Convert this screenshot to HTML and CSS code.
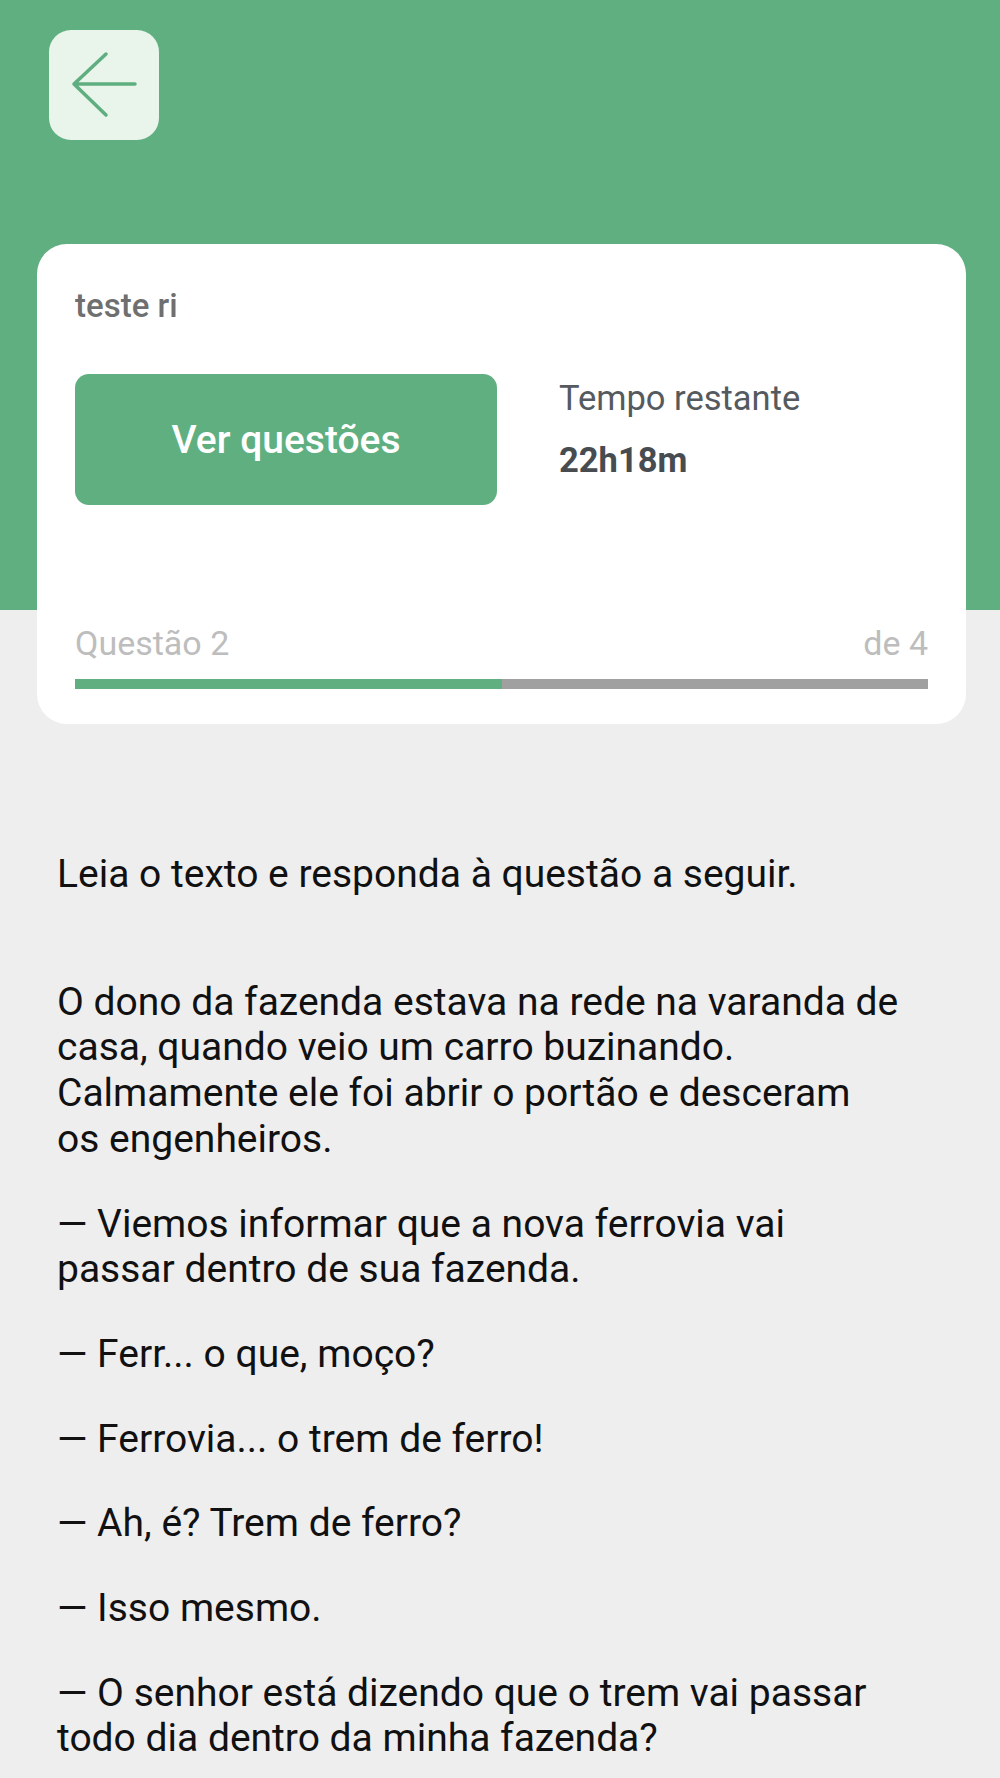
FILE: index.html
```html
<!DOCTYPE html>
<html lang="pt-BR">
<head>
    <meta charset="UTF-8">
    <meta name="viewport" content="width=device-width, initial-scale=1.0">
    <title>Questão 2 de 4</title>
    <link rel="stylesheet" href="styles.css">
</head>
<body>
    <div class="top">
        <button class="back" aria-label="Voltar">
            <svg width="110" height="110" viewBox="0 0 110 110">
                <path d="M86 54 H25 M57 24 L25 54 L57 85" fill="none" stroke="#5fae7f" stroke-width="3.5" stroke-linecap="round" stroke-linejoin="round"/>
            </svg>
        </button>

        <div class="card">
            <div class="card-title">teste ri</div>
            <div class="card-row">
                <button class="see-btn">Ver questões</button>
                <div class="timer">
                    <div class="timer-label">Tempo restante</div>
                    <div class="timer-value">22h18m</div>
                </div>
            </div>
            <div class="progress-info">
                <span>Questão 2</span>
                <span>de 4</span>
            </div>
            <div class="progress">
                <div class="progress-fill" style="width: 50%"></div>
            </div>
        </div>
    </div>

    <div class="content">
        <p class="intro">Leia o texto e responda à questão a seguir.</p>
        <p>O dono da fazenda estava na rede na varanda de casa, quando veio um carro buzinando. Calmamente ele foi abrir o portão e desceram os engenheiros.</p>
        <p>— Viemos informar que a nova ferrovia vai passar dentro de sua fazenda.</p>
        <p>— Ferr... o que, moço?</p>
        <p>— Ferrovia... o trem de ferro!</p>
        <p>— Ah, é? Trem de ferro?</p>
        <p>— Isso mesmo.</p>
        <p>— O senhor está dizendo que o trem vai passar todo dia dentro da minha fazenda?</p>
    </div>
</body>
</html>
```

FILE: styles.css
```css
body {
    margin: 0;
    font-family: Roboto, 'Noto Sans', sans-serif;
    background-color: #efeeef;
}
.top {
    background: linear-gradient(#60af80 0, #60af80 610px, transparent 610px);
    padding: 30px 34px 0 37px;
}
.back {
    display: block;
    width: 110px;
    height: 110px;
    margin-left: 12px;
    padding: 0;
    border: none;
    border-radius: 22px;
    background-color: #e9f4eb;
}
.back svg {
    display: block;
}
.card {
    margin-top: 104px;
    background-color: #fff;
    border-radius: 30px;
    padding: 42px 38px 35px 38px;
}
.card-title {
    font-size: 33px;
    line-height: 40px;
    font-weight: 500;
    color: #6f6f6f;
}
.card-row {
    display: flex;
    margin-top: 48px;
}
.see-btn {
    width: 422px;
    height: 131px;
    border: none;
    border-radius: 14px;
    background-color: #60af80;
    color: #fff;
    font-family: inherit;
    font-size: 39px;
    font-weight: 500;
    padding: 0;
}
.timer {
    margin-left: 62px;
    padding-top: 4px;
}
.timer-label {
    font-size: 34.5px;
    line-height: 40px;
    color: #555a5f;
}
.timer-value {
    margin-top: 22px;
    font-size: 34.5px;
    line-height: 40px;
    font-weight: 700;
    color: #474c51;
}
.progress-info {
    display: flex;
    justify-content: space-between;
    margin-top: 118px;
    font-size: 34px;
    line-height: 40px;
    color: #bdbdbd;
}
.progress {
    height: 10px;
    margin-top: 16px;
    background-color: #a0a0a0;
}
.progress-fill {
    height: 100%;
    background-color: #60af80;
}
.content {
    padding: 128px 100.5px 0 57px;
    color: #111;
    font-size: 39px;
    line-height: 45.7px;
}
.content p {
    margin: 0 0 39px 0;
}
.content .intro {
    margin-bottom: 82px;
}
```
